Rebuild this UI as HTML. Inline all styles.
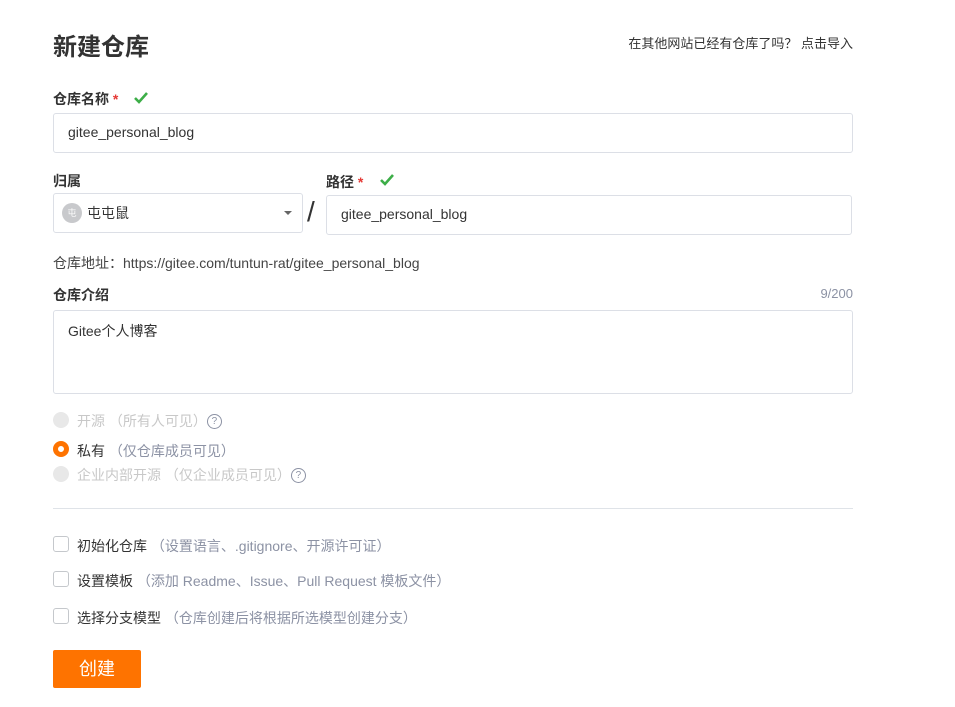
<!DOCTYPE html>
<html><head><meta charset="utf-8"><style>
*{box-sizing:border-box;margin:0;padding:0}
body{width:955px;height:707px;background:#fff;font-family:"Liberation Sans","Noto Sans CJK SC",sans-serif;font-size:14px;color:#333;position:relative;overflow:hidden}
.a{position:absolute;white-space:nowrap}
.lbl{font-weight:bold;font-size:14px;color:#333}
.star{color:#e53935}
.box{position:absolute;border:1px solid #dcdfe6;border-radius:3px;background:#fff}
.chk{position:absolute;width:16px;height:16px;border:1px solid #c5c8cc;border-radius:3px;left:53px}
.rad{position:absolute;width:16px;height:16px;border-radius:50%;left:53px;background:#e8e8e8}
.gray{color:#8c92a4}
.dis{color:#c8c8c8}
.q{display:inline-block;width:15px;height:15px;border:1.3px solid #8c92a4;border-radius:50%;font-size:10px;line-height:13px;text-align:center;color:#8c92a4;vertical-align:2px}
</style></head><body>
<div class="a" style="left:53px;top:27px;font-size:24px;font-weight:bold;color:#333">新建仓库</div>
<div class="a" style="right:102px;top:33px;font-size:13px;color:#333">在其他网站已经有仓库了吗？ 点击导入</div>

<div class="a lbl" style="left:53px;top:89px">仓库名称 <span class="star">*</span></div>
<svg class="a" style="left:133px;top:91px" width="16" height="14" viewBox="0 0 16 14"><path d="M2 7l4 4 8-9" stroke="#3dae48" stroke-width="2.6" fill="none"/></svg>
<div class="box" style="left:53px;top:113px;width:800px;height:40px"></div>
<div class="a" style="left:68px;top:124px">gitee_personal_blog</div>

<div class="a lbl" style="left:53px;top:171px">归属</div>
<div class="box" style="left:53px;top:193px;width:250px;height:40px"></div>
<div class="a" style="left:62px;top:203px;width:20px;height:20px;border-radius:50%;background:#c8c9cc;color:#fff;font-size:9px;text-align:center;line-height:20px">屯</div>
<div class="a" style="left:87px;top:203px">屯屯鼠</div>
<div class="a" style="left:284px;top:211px;width:0;height:0;border-left:4px solid transparent;border-right:4px solid transparent;border-top:4px solid #666"></div>
<div class="a" style="left:307px;top:196px;font-size:28px;color:#333;font-weight:300">/</div>
<div class="a lbl" style="left:326px;top:172px">路径 <span class="star">*</span></div>
<svg class="a" style="left:379px;top:173px" width="16" height="14" viewBox="0 0 16 14"><path d="M2 7l4 4 8-9" stroke="#3dae48" stroke-width="2.6" fill="none"/></svg>
<div class="box" style="left:326px;top:195px;width:526px;height:40px"></div>
<div class="a" style="left:341px;top:206px">gitee_personal_blog</div>

<div class="a" style="left:53px;top:253px;color:#444">仓库地址：https://gitee.com/tuntun-rat/gitee_personal_blog</div>

<div class="a lbl" style="left:53px;top:285px">仓库介绍</div>
<div class="a gray" style="right:102px;top:286px;font-size:13px">9/200</div>
<div class="box" style="left:53px;top:310px;width:800px;height:84px"></div>
<div class="a" style="left:68px;top:321px">Gitee个人博客</div>

<div class="rad" style="top:412px"></div>
<div class="a dis" style="left:77px;top:411px">开源 （所有人可见）<span class="q">?</span></div>
<div class="rad" style="top:441px;background:#fff;border:5px solid #fe7300"></div>
<div class="a" style="left:77px;top:441px">私有 <span class="gray">（仅仓库成员可见）</span></div>
<div class="rad" style="top:466px"></div>
<div class="a dis" style="left:77px;top:465px">企业内部开源 （仅企业成员可见）<span class="q">?</span></div>

<div class="a" style="left:53px;top:508px;width:800px;height:1px;background:#dfe3e8"></div>

<div class="chk" style="top:536px"></div>
<div class="a" style="left:77px;top:536px">初始化仓库 <span class="gray">（设置语言、.gitignore、开源许可证）</span></div>
<div class="chk" style="top:571px"></div>
<div class="a" style="left:77px;top:571px">设置模板 <span class="gray">（添加 Readme、Issue、Pull Request 模板文件）</span></div>
<div class="chk" style="top:608px"></div>
<div class="a" style="left:77px;top:608px">选择分支模型 <span class="gray">（仓库创建后将根据所选模型创建分支）</span></div>

<div class="a" style="left:53px;top:650px;width:88px;height:38px;background:#fe7300;border-radius:2px;color:#fff;font-size:18px;text-align:center;line-height:38px">创建</div>
</body></html>
